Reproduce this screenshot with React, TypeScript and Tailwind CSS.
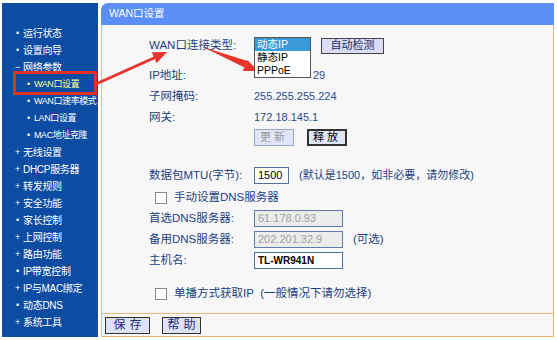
import type { ReactNode } from 'react';

const menu: { label: string; mark: 'dot' | 'plus' | 'minus'; sub?: boolean; active?: boolean }[] = [
  { label: '运行状态', mark: 'dot' },
  { label: '设置向导', mark: 'dot' },
  { label: '网络参数', mark: 'minus' },
  { label: 'WAN口设置', mark: 'dot', sub: true, active: true },
  { label: 'WAN口速率模式', mark: 'dot', sub: true },
  { label: 'LAN口设置', mark: 'dot', sub: true },
  { label: 'MAC地址克隆', mark: 'dot', sub: true },
  { label: '无线设置', mark: 'plus' },
  { label: 'DHCP服务器', mark: 'plus' },
  { label: '转发规则', mark: 'plus' },
  { label: '安全功能', mark: 'plus' },
  { label: '家长控制', mark: 'dot' },
  { label: '上网控制', mark: 'plus' },
  { label: '路由功能', mark: 'plus' },
  { label: 'IP带宽控制', mark: 'dot' },
  { label: 'IP与MAC绑定', mark: 'plus' },
  { label: '动态DNS', mark: 'dot' },
  { label: '系统工具', mark: 'plus' },
];

const font = { fontFamily: '"Liberation Sans", "Noto Sans CJK SC", sans-serif' };

function App() {
  return (
    <div className="relative w-[557px] h-[340px] bg-white flex pt-[3px] pl-[2px] gap-[3px] overflow-hidden" style={font}>
      <Sidebar />
      <Main />
      <Annotations />
    </div>
  );
}

function Sidebar() {
  return (
    <div className="w-[96px] h-[334px] bg-[#0c4ca3] pt-[22px] flex flex-col">
      {menu.map((item) => (
        <div
          key={item.label}
          className={`h-[17px] flex items-center whitespace-nowrap leading-none ${
            item.sub ? 'pl-[22px] text-[9px] tracking-[-0.4px]' : 'pl-[11px] text-[10px] tracking-[-0.3px]'
          } ${item.active ? 'text-[#ffff9a]' : 'text-white'}`}
        >
          <span className="w-[9px] shrink-0 flex justify-center text-[9px]">
            {item.mark === 'dot' ? '•' : item.mark === 'plus' ? '+' : '−'}
          </span>
          <span className="ml-[1px]">{item.label}</span>
        </div>
      ))}
    </div>
  );
}

function Row({ label, children, className = '' }: { label?: string; children?: ReactNode; className?: string }) {
  return (
    <div className={`h-[21px] flex items-center pl-[47px] ${className}`}>
      <div className="w-[105px] text-[11.5px] text-[#1c3f80]">{label}</div>
      <div className="flex items-center gap-[10px] text-[11px] text-[#2a4d8f]">{children}</div>
    </div>
  );
}

function Checkbox() {
  return <span className="w-[12px] h-[12px] border border-[#888] bg-white inline-block" />;
}

function Main() {
  return (
    <div className="w-[453px] h-[334px] flex flex-col">
      <div className="h-[22px] bg-[#5b8ef7] rounded-tl-[7px] flex items-center pl-[8px] text-[10.5px] text-white">
        WAN口设置
      </div>
      <div className="flex-1 border-x border-b border-[#f2b572] bg-[#f7f7f7] flex flex-col">
        <div className="h-[288px] flex flex-col pt-[10px]">
          <Row label="WAN口连接类型:" className="relative">
            <div className="w-[57px]" />
            <button className="w-[63px] h-[16px] bg-[#dcdcf6] border border-[#444] text-[11px] text-[#222c5c] leading-none">
              自动检测
            </button>
            <div className="absolute left-[152px] top-[2px] w-[57px] h-[41px] border border-[#555] bg-white flex flex-col text-[10.5px] leading-none z-10">
              <div className="h-[13px] bg-[#3a9ad9] text-white flex items-center pl-[2px]">动态IP</div>
              <div className="h-[13px] text-black flex items-center pl-[2px]">静态IP</div>
              <div className="h-[13px] text-black flex items-center pl-[2px]">PPPoE</div>
            </div>
          </Row>
          <Row label="IP地址:" className="mt-[9px]">
            <span className="w-[57px]" />
            <span className="ml-[-10px] pl-[2px]">29</span>
          </Row>
          <Row label="子网掩码:">
            <span>255.255.255.224</span>
          </Row>
          <Row label="网关:">
            <span>172.18.145.1</span>
          </Row>
          <Row className="mt-[-1px]">
            <button className="w-[40px] h-[17px] bg-[#e1e5fa] border border-[#9aa3c8] text-[11px] text-[#9a9a9a] leading-none tracking-[3px]">
              更新
            </button>
            <button className="w-[40px] h-[17px] ml-[3px] bg-[#e1e5f8] border-2 border-[#333] text-[11px] text-black leading-none tracking-[3px]">
              释放
            </button>
          </Row>
          <Row label="数据包MTU(字节):" className="mt-[17px]">
            <span className="w-[35px] h-[17px] border border-[#5570a0] bg-white text-black flex items-center pl-[3px]">1500</span>
            <span className="text-[11px] text-[#1c3f80]">(默认是1500，如非必要，请勿修改)</span>
          </Row>
          <div className="h-[21px] flex items-center pl-[53px] gap-[7px] mt-[1px]">
            <Checkbox />
            <span className="text-[11.5px] text-[#1c3f80]">手动设置DNS服务器</span>
          </div>
          <Row label="首选DNS服务器:">
            <span className="w-[89px] h-[17px] border border-[#6677aa] bg-[#ececec] text-[#a0a0a0] flex items-center pl-[3px]">61.178.0.93</span>
          </Row>
          <Row label="备用DNS服务器:">
            <span className="w-[89px] h-[17px] border border-[#6677aa] bg-[#ececec] text-[#a0a0a0] flex items-center pl-[3px]">202.201.32.9</span>
            <span className="text-[11.5px] text-[#1c3f80]">(可选)</span>
          </Row>
          <Row label="主机名:">
            <span className="w-[89px] h-[17px] border border-[#5570a0] bg-white text-black font-bold text-[10px] flex items-center pl-[3px]">TL-WR941N</span>
          </Row>
          <div className="h-[21px] flex items-center pl-[53px] gap-[7px] mt-[12px]">
            <Checkbox />
            <span className="text-[11.5px] text-[#1c3f80]">单播方式获取IP&nbsp;&nbsp;(一般情况下请勿选择)</span>
          </div>
        </div>
        <div className="flex-1 border-t border-[#f2b572] flex items-center pl-[3px] gap-[12px]">
          <button className="w-[45px] h-[17px] bg-[#dde0f7] border border-[#333] text-[12px] text-[#1c2f6f] leading-none tracking-[4px] pl-[4px]">
            保存
          </button>
          <button className="w-[39px] h-[17px] bg-[#dde0f7] border border-[#333] text-[12px] text-[#1c2f6f] leading-none tracking-[4px] pl-[4px]">
            帮助
          </button>
        </div>
      </div>
    </div>
  );
}

function Annotations() {
  return (
    <>
      <div className="absolute left-[13px] top-[71px] w-[84px] h-[24px] border-[3px] border-[#e2312b] pointer-events-none" />
      <svg className="absolute left-0 top-0 pointer-events-none" width="557" height="340">
        <line x1="96" y1="84" x2="155" y2="57.5" stroke="#e8342a" strokeWidth="3" />
        <polygon points="167,52 156.6,63.2 151.8,52.2" fill="#e8342a" />
        <polygon points="203,47 247.4,61 244.6,67.5" fill="#e8342a" />
        <polygon points="258,71 242.8,71.1 247.4,60.1" fill="#e8342a" />
      </svg>
    </>
  );
}

export default App;
